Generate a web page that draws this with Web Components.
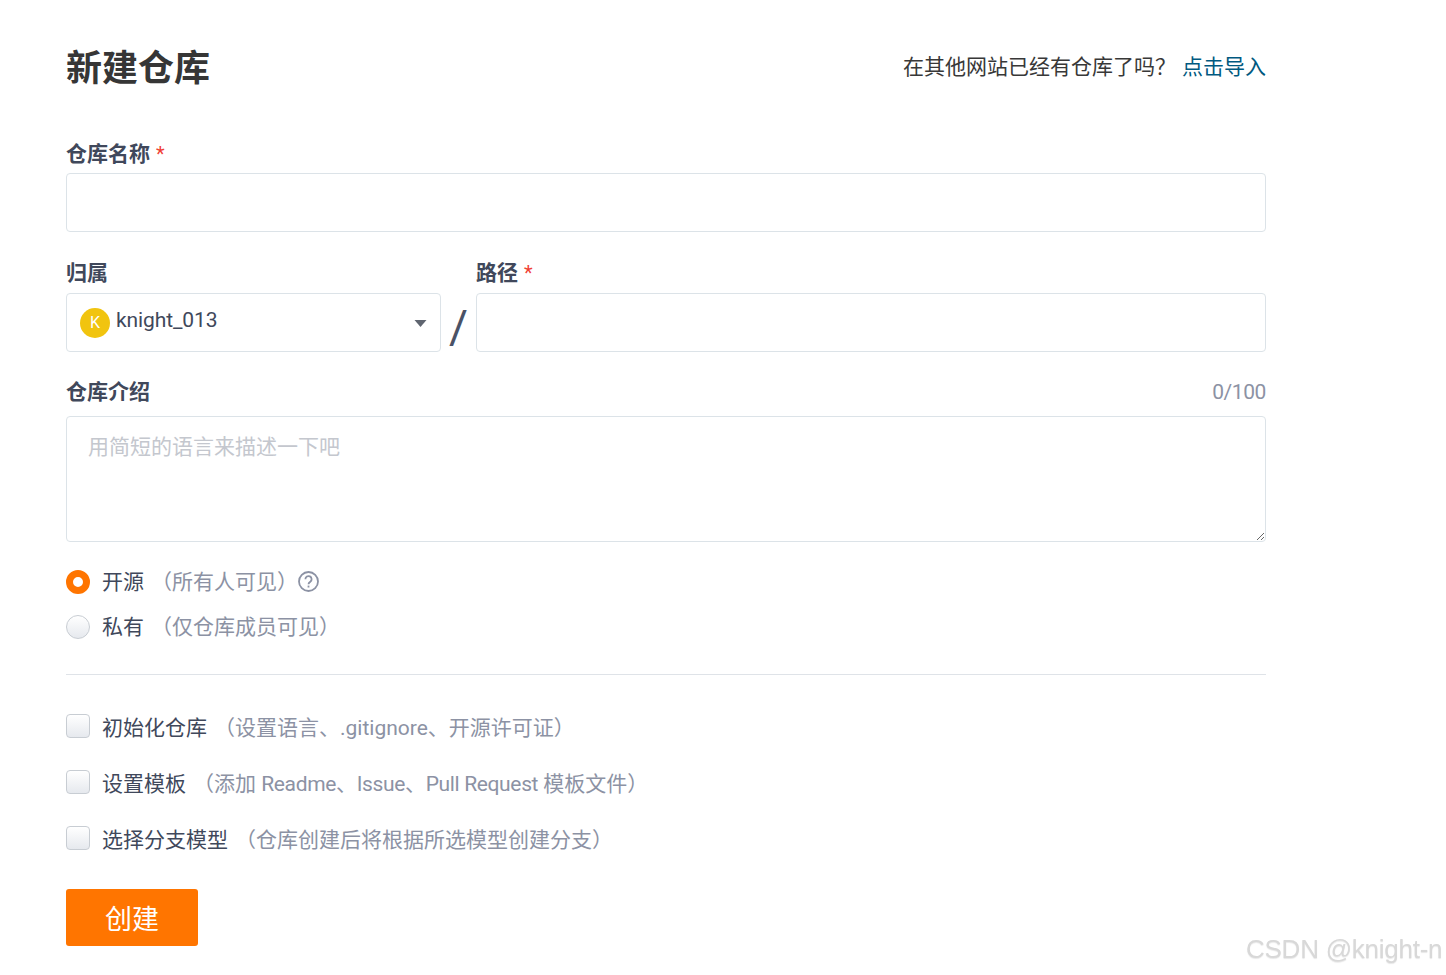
<!DOCTYPE html>
<html lang="zh"><head><meta charset="utf-8"><title>新建仓库</title>
<style>
html,body{margin:0;background:#fff}
body{font-family:Roboto,"Noto Sans CJK SC",sans-serif;color:#40485b;font-size:21px}
</style></head><body>
<new-repo-page></new-repo-page>
<script>
function el(name, css, html){
  customElements.define(name, class extends HTMLElement{
    constructor(){super();const s=this.attachShadow({mode:"open"});s.innerHTML=`<style>${css}</style>${typeof html==="function"?html(this):html}`;}
  });
}
const F='Roboto,"Noto Sans CJK SC",sans-serif';
el("page-header",`:host{display:flex;justify-content:space-between;align-items:center;height:60px}
 h1{margin:0;font:700 36px/60px ${F};color:#363636;position:relative;top:2px}
 .r{font:21px/30px ${F};color:#383838;display:flex;gap:6px;align-items:center}
 a{color:#005980;text-decoration:none}`,
 `<h1><slot name="title"></slot></h1><div class="r"><span><slot name="note"></slot></span><a href="#"><slot name="link"></slot></a></div>`);
el("field-label",`:host{display:flex;justify-content:space-between;align-items:center;height:30px;font:700 21px/30px ${F};color:#40485b}
 .l{position:relative;top:1px}
 .req{color:#f04134;font-weight:400;margin-left:6px;font-size:20px}
 .c{font-weight:400;color:#8c92a4;letter-spacing:-.4px}`,
 h=>`<span class="l"><slot></slot>${h.hasAttribute("required")?'<span class="req">*</span>':''}</span>${h.hasAttribute("count")?`<span class="l c">${h.getAttribute("count")}</span>`:''}`);
el("text-box",`:host{display:block}
 input{display:block;box-sizing:border-box;width:100%;height:59px;border:1px solid #dce3e8;border-radius:4px;outline:0;background:#fff;padding:0 20px;font:21px ${F}}`,
 `<input type="text" aria-label="text">`);
el("owner-select",`:host{display:flex;box-sizing:border-box;align-items:center;height:59px;border:1px solid #dce3e8;border-radius:4px;padding:0 13px;background:#fff;font:21px/30px ${F};color:#40485b}
 .av{width:30px;height:30px;border-radius:50%;background:#f1c40f;color:#fff;font:16px/30px ${F};text-align:center;flex:none}
 .n{margin-left:6px;flex:1;margin-top:-5px;letter-spacing:-.1px}
 svg{display:block;margin-top:2px}`,
 `<span class="av">K</span><span class="n"><slot></slot></span><svg width="13" height="7" viewBox="0 0 13 7"><path d="M.5 0h12L6.5 7z" fill="#5f6570"/></svg>`);
el("desc-box",`:host{display:block}
 textarea{display:block;box-sizing:border-box;width:100%;height:126px;border:1px solid #dce3e8;border-radius:4px;outline:0;padding:15px 21px;font:21px/30px ${F};color:#40485b;resize:vertical;background:#fff}
 textarea::placeholder{color:#c4c7ce;opacity:1}`,
 h=>`<textarea placeholder="${h.getAttribute("placeholder")}"></textarea>`);
el("choice-row",`:host{display:flex;align-items:center;height:30px;font:21px/30px ${F};color:#40485b}
 .m{box-sizing:border-box;width:24px;height:24px;flex:none;margin-right:12px;border:1px solid #c8cdd3;background:linear-gradient(#fff,#e6e9ee)}
 :host([kind=radio]) .m{border-radius:50%}
 :host([kind=check]) .m{border-radius:4px;margin-top:-4px}
 :host([checked]) .m{background:#fff;border:7.5px solid #ff7500}
 .h{color:#8c92a4;margin-left:7px}
 .q{display:block;position:relative;top:-1px}`,
 h=>`<span class="m"></span><span><slot></slot></span><span class="h"><slot name="hint"></slot></span>${h.hasAttribute("help")?`<svg class="q" width="21" height="21" viewBox="0 0 21 21" fill="none" stroke="#8c92a4" stroke-width="1.8"><circle cx="10.5" cy="10.5" r="9.5"/><path d="M7.4 8.2a3.1 3.1 0 1 1 4.9 2.5c-1.1.8-1.8 1.3-1.8 2.6"/><path d="M10.5 14.6v1.9"/></svg>`:''}`);
el("primary-button",`:host{display:block;width:132px}
 button{display:block;width:100%;height:57px;border:0;border-radius:3px;background:#ff7500;color:#fff;font:27px/52px ${F};padding:5px 0 0}`,
 `<button type="button"><slot></slot></button>`);
el("new-repo-page",`:host{display:block;box-sizing:border-box;width:1332px;padding:37px 66px 0;height:975px}
 .f1{margin-top:41px}
 .row{display:flex;margin-top:25px}
 .own{width:375px;flex:none}
 .sl{width:35px;flex:none;display:flex;align-items:flex-end;justify-content:center;color:#4a5266;font:400 46px/50px ${F}}
 .path{flex:1}
 .d{margin-top:25px}
 .radios{margin-top:25px;display:flex;flex-direction:column;gap:15px}
 hr{border:0;border-top:1px solid #dfe3e8;margin:32px 0 0}
 .checks{margin-top:38px;display:flex;flex-direction:column;gap:26px}
 primary-button{margin-top:34px}
 .wm{position:fixed;left:1246px;top:931px;font:26px/36px "Liberation Sans",sans-serif;letter-spacing:-.25px;color:#d8d8d8;text-shadow:0 1px 1px #e8e8e8;white-space:nowrap}`,
 `<page-header><span slot="title">新建仓库</span><span slot="note">在其他网站已经有仓库了吗？</span><span slot="link">点击导入</span></page-header>
 <div class="f1"><field-label required>仓库名称</field-label><text-box style="margin-top:5px"></text-box></div>
 <div class="row">
  <div class="own"><field-label>归属</field-label><owner-select style="margin-top:6px">knight_013</owner-select></div>
  <div class="sl">/</div>
  <div class="path"><field-label required>路径</field-label><text-box style="margin-top:6px"></text-box></div>
 </div>
 <div class="d"><field-label count="0/100" style="position:relative;top:-1px">仓库介绍</field-label><desc-box style="margin-top:9px" placeholder="用简短的语言来描述一下吧"></desc-box></div>
 <div class="radios">
  <choice-row kind="radio" checked help>开源<span slot="hint">（所有人可见）</span></choice-row>
  <choice-row kind="radio">私有<span slot="hint">（仅仓库成员可见）</span></choice-row>
 </div>
 <hr>
 <div class="checks">
  <choice-row kind="check">初始化仓库<span slot="hint">（设置语言、.gitignore、开源许可证）</span></choice-row>
  <choice-row kind="check">设置模板<span slot="hint">（添加 <span style="letter-spacing:-.35px">Readme、Issue、Pull Request</span> 模板文件）</span></choice-row>
  <choice-row kind="check">选择分支模型<span slot="hint">（仓库创建后将根据所选模型创建分支）</span></choice-row>
 </div>
 <primary-button>创建</primary-button>
 <div class="wm">CSDN @knight-n</div>`);
</script>
</body></html>
